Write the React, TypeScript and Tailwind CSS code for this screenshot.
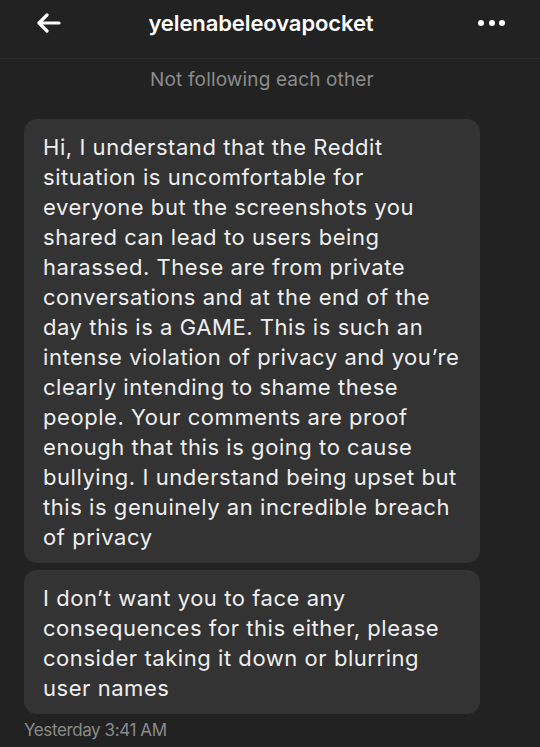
import React from "react";

const msg1 = [
  "Hi, I understand that the Reddit",
  "situation is uncomfortable for",
  "everyone but the screenshots you",
  "shared can lead to users being",
  "harassed. These are from private",
  "conversations and at the end of the",
  "day this is a GAME. This is such an",
  "intense violation of privacy and you\u2019re",
  "clearly intending to shame these",
  "people. Your comments are proof",
  "enough that this is going to cause",
  "bullying. I understand being upset but",
  "this is genuinely an incredible breach",
  "of privacy",
];

const msg2 = [
  "I don\u2019t want you to face any",
  "consequences for this either, please",
  "consider taking it down or blurring",
  "user names",
];

function Bubble({ lines }: { lines: string[] }) {
  return (
    <div className="w-[456px] rounded-[13px] bg-[#333333] pl-[19px] pr-3 pt-[13px] pb-[11px]">
      {lines.map((l, i) => (
        <div key={i} className="whitespace-nowrap text-[22px] leading-[30px] tracking-[0.55px] text-[#efefef]">
          {l}
        </div>
      ))}
    </div>
  );
}

export default function App() {
  return (
    <div
      className="w-[540px] h-[747px] overflow-hidden bg-[#222222] flex flex-col"
      style={{ fontFamily: "Inter, 'Noto Sans', sans-serif" }}
    >
      <div className="h-[59px] shrink-0 flex items-center pl-[36px] pr-[35px] border-b border-[#2a2a2a] pb-[12px]">
        <svg width="25" height="20" viewBox="0 0 25 20" fill="none">
          <path d="M23 10H3M11 2L3 10L11 18" stroke="#ffffff" strokeWidth="3.2" strokeLinecap="round" strokeLinejoin="round" />
        </svg>
        <div className="flex-1 text-center pr-[17px] text-[22px] font-semibold text-white tracking-[-0.1px]">yelenabeleovapocket</div>
        <div className="flex gap-[4.5px]">
          <span className="w-[6px] h-[6px] rounded-full bg-white" />
          <span className="w-[6px] h-[6px] rounded-full bg-white" />
          <span className="w-[6px] h-[6px] rounded-full bg-white" />
        </div>
      </div>
      <div className="text-center pr-[16px] text-[19px] tracking-[0.15px] text-[#8c8c8c] mt-[8px] leading-[26px]">Not following each other</div>
      <div className="flex flex-col gap-[7px] pl-[24px] mt-[26px]">
        <Bubble lines={msg1} />
        <Bubble lines={msg2} />
      </div>
      <div className="pl-[24px] mt-[4px] text-[17px] text-[#8a8a8a] tracking-[-0.4px]">Yesterday 3:41 AM</div>
    </div>
  );
}
